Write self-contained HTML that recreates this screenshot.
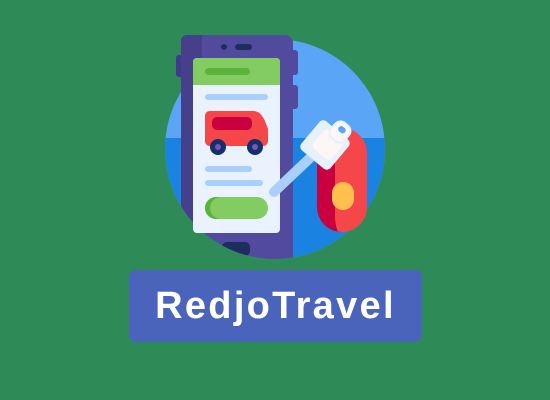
<!DOCTYPE html>
<html><head><meta charset="utf-8"><style>
html,body{margin:0;padding:0}
body{width:550px;height:400px;background:#2e8b57;position:relative;overflow:hidden;font-family:"Liberation Sans",sans-serif}
.banner{position:absolute;left:129px;top:270px;width:293px;height:72px;background:#4a64bb;border-radius:7px;color:#fff;font-weight:bold;font-size:38px;letter-spacing:2.3px;text-align:center;line-height:72px}
svg{position:absolute;left:0;top:0}
</style></head><body>
<svg width="550" height="400" viewBox="0 0 550 400">
<defs>
<clipPath id="c"><circle cx="275" cy="149" r="110"/></clipPath>
<clipPath id="p"><circle cx="275" cy="149" r="110"/><rect x="0" y="0" width="550" height="150"/></clipPath>
</defs>
<circle cx="275" cy="149" r="110" fill="#5aa5f5"/>
<rect x="160" y="138" width="240" height="130" fill="#1a82e0" clip-path="url(#c)"/>
<!-- phone -->
<rect x="176" y="55" width="8" height="22" rx="3" fill="#3f3a8a"/>
<rect x="290" y="50" width="8" height="25" rx="3" fill="#524a9c"/>
<rect x="290" y="85" width="8" height="24" rx="3" fill="#524a9c"/>
<g clip-path="url(#p)">
<rect x="181" y="35" width="112" height="240" rx="8" fill="#524a9c"/>
<rect x="181" y="35" width="17" height="240" rx="6" fill="#453f8c"/>
<rect x="192" y="35" width="10" height="240" fill="#453f8c"/>
<rect x="222" y="242" width="28" height="14" rx="5" fill="#1c2d5e"/>
</g>
<circle cx="224" cy="47" r="3" fill="#1c2d5e"/>
<rect x="235" y="44" width="17" height="6" rx="3" fill="#1c2d5e"/>
<rect x="193" y="58" width="87" height="175" rx="4" fill="#eaf3fd"/>
<path d="M197 58h79a4 4 0 0 1 4 4v23h-87v-23a4 4 0 0 1 4-4z" fill="#82cc62"/>
<rect x="205" y="68" width="45" height="7" rx="3.5" fill="#5cb33a"/>
<rect x="205" y="94" width="63" height="6" rx="3" fill="#a8d0fa"/>
<path d="M210 111h43c6 0 9 4 12 10l3 8v12c0 3-2 5-5 5h-53c-3 0-5-2-5-5v-25c0-3 2-5 5-5z" fill="#f5474a"/>
<rect x="212" y="117" width="40" height="13" rx="5" fill="#c8003f"/>
<circle cx="218" cy="147" r="8" fill="#13306e"/><circle cx="218" cy="147" r="3" fill="#7b56a8"/>
<circle cx="255" cy="147" r="8" fill="#13306e"/><circle cx="255" cy="147" r="3" fill="#7b56a8"/>
<rect x="205" y="166" width="47" height="6" rx="3" fill="#a8d0fa"/>
<rect x="205" y="180" width="58" height="6" rx="3" fill="#a8d0fa"/>
<rect x="205" y="197" width="63" height="22" rx="11" fill="#82cc62"/>
<path d="M216 197a11 11 0 0 0 0 22h5a11 11 0 0 1 0-22z" fill="#5cb33a"/>
<!-- fob -->
<rect x="317" y="128" width="50" height="104" rx="25" fill="#f5474a"/>
<path d="M342 128a25 25 0 0 0-25 25v54a25 25 0 0 0 25 25h-4c-2-5-3-10-3-15v-79c0-4 1-7 7-10z" fill="#c8003f"/>
<rect x="332" y="182" width="22" height="28" rx="11" fill="#ffc04d"/>
<!-- key -->
<line x1="274" y1="192" x2="310" y2="158" stroke="#a8d0fa" stroke-width="10" stroke-linecap="round"/>
<g transform="rotate(40 325 145)">
<rect x="306" y="126" width="38" height="38" rx="5" fill="#e6f1fc"/>
<rect x="315" y="131" width="24" height="24" rx="4" fill="#fdf6f6"/>
</g>
<g transform="rotate(40 340 132)">
<rect x="331" y="122" width="18" height="20" rx="7" fill="#fdf6f6" stroke="#e6f1fc" stroke-width="2"/>
<rect x="336" y="126" width="8" height="6" rx="3" fill="#5aa5f5"/>
</g>
</svg>
<div class="banner">RedjoTravel</div>
</body></html>
